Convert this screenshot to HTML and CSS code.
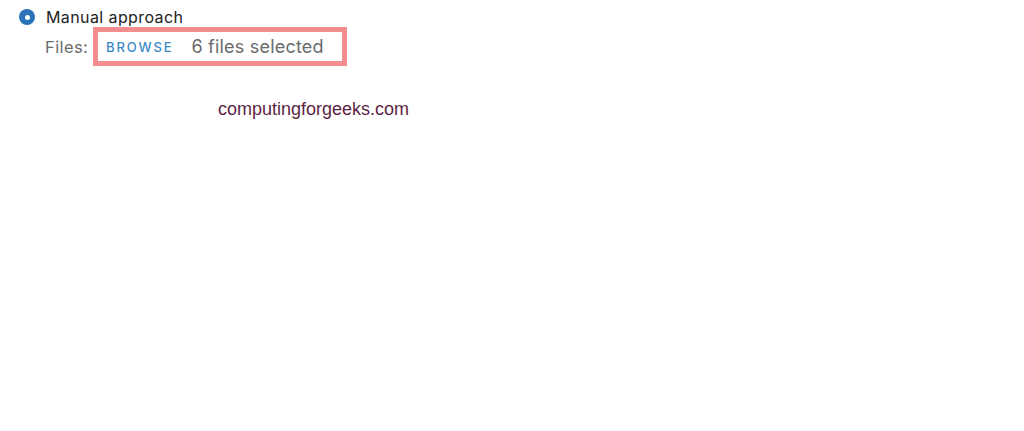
FILE: index.html
```html
<!DOCTYPE html>
<html>
<head>
<meta charset="utf-8">
<link rel="stylesheet" href="styles.css">
</head>
<body>
<div class="page">
  <div class="option">
    <span class="radio"><span class="dot"></span></span>
    <span class="option-label">Manual approach</span>
  </div>
  <div class="files-row">
    <span class="files-label">Files:</span>
    <div class="highlight">
      <span class="browse">BROWSE</span>
      <span class="selected">6 files selected</span>
    </div>
  </div>
  <div class="watermark">computingforgeeks.com</div>
</div>
</body>
</html>
```

FILE: styles.css
```css
html, body {
  margin: 0;
  padding: 0;
  background: #ffffff;
}
.page {
  width: 1024px;
  height: 431px;
  font-family: Inter, "Liberation Sans", Arial, sans-serif;
  padding-top: 8px;
  box-sizing: border-box;
}
.option {
  display: flex;
  align-items: center;
  padding-left: 19px;
  height: 18px;
}
.radio {
  width: 16px;
  height: 16px;
  border-radius: 50%;
  background: #2b73b9;
  display: flex;
  align-items: center;
  justify-content: center;
}
.dot {
  width: 5px;
  height: 5px;
  border-radius: 50%;
  background: #ffffff;
}
.option-label {
  margin-left: 11px;
  font-size: 16px;
  letter-spacing: 0.4px;
  color: #222222;
}
.files-row {
  display: flex;
  align-items: center;
  margin-left: 45px;
  margin-top: 1px;
}
.files-label {
  font-size: 16.5px;
  letter-spacing: 0.4px;
  color: #6b6b6b;
  width: 48px;
}
.highlight {
  display: flex;
  align-items: center;
  border: 5px solid #f48d8e;
  width: 244px;
  height: 29px;
}
.browse {
  margin-left: 8px;
  font-size: 13px;
  color: #3c89c5;
  letter-spacing: 1.9px;
  font-weight: 500;
}
.selected {
  margin-left: 18px;
  font-size: 18px;
  letter-spacing: 0.2px;
  color: #6a6a6a;
}
.watermark {
  margin-top: 33px;
  margin-left: 218px;
  font-size: 18px;
  color: #5c1f44;
  font-family: "Liberation Sans", Arial, sans-serif;
}
```
